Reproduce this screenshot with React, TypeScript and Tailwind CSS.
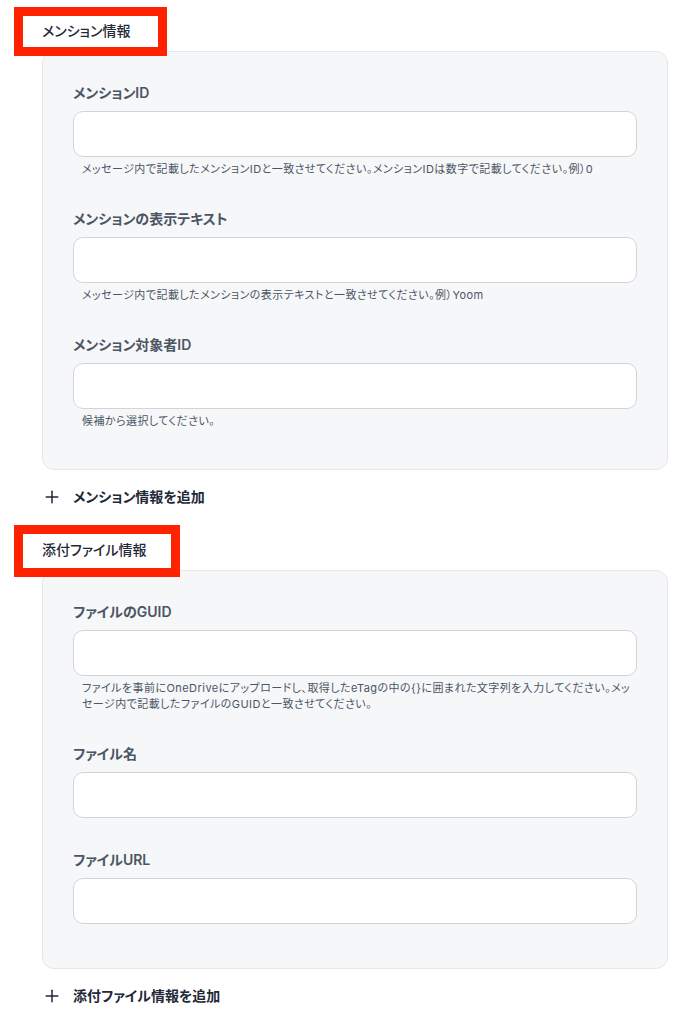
import { Plus } from "lucide-react";

type Field = {
  label: string;
  help?: string;
};

const mentionFields: Field[] = [
  {
    label: "メンションID",
    help: "メッセージ内で記載したメンションIDと一致させてください。メンションIDは数字で記載してください。例）0",
  },
  {
    label: "メンションの表示テキスト",
    help: "メッセージ内で記載したメンションの表示テキストと一致させてください。例）Yoom",
  },
  {
    label: "メンション対象者ID",
    help: "候補から選択してください。",
  },
];

const fileFields: Field[] = [
  {
    label: "ファイルのGUID",
    help: "ファイルを事前にOneDriveにアップロードし、取得したeTagの中の{}に囲まれた文字列を入力してください。メッセージ内で記載したファイルのGUIDと一致させてください。",
  },
  { label: "ファイル名" },
  { label: "ファイルURL" },
];

const FormField = ({ label, help }: Field) => (
  <div>
    <label className="block text-[14px] leading-5 font-semibold text-[#4b5563]">
      {label}
    </label>
    <input
      type="text"
      className="mt-2 block h-[46px] w-full rounded-[10px] border border-[#d1d5db] bg-white px-3 text-sm outline-none"
    />
    {help && (
      <p className="mt-1 pl-[9px] text-[11px] leading-4 tracking-[0.45px] text-[#4b5563]">
        {help}
      </p>
    )}
  </div>
);

const Section = ({
  title,
  frame,
  fields,
  addLabel,
  pb,
}: {
  title: string;
  frame: string;
  fields: Field[];
  addLabel: string;
  pb: string;
}) => (
  <section>
    <div className="relative pl-[42px]">
      <h3 className="text-[14px] leading-5 font-medium text-[#1f2937]">{title}</h3>
      {/* highlight frame around the section heading */}
      <div className={`absolute left-[14px] z-10 border-[9px] border-[#ff2200] ${frame}`} />
    </div>
    <div
      className={`mt-[10px] ml-[42px] mr-2 rounded-xl border border-[#e5e7eb] bg-[#f6f7f9] px-[30px] pt-[31px] ${pb}`}
    >
      <div className="flex flex-col gap-[32px]">
        {fields.map((f) => (
          <FormField key={f.label} {...f} />
        ))}
      </div>
    </div>
    <button className="mt-[17px] ml-[42px] flex items-center gap-[11px] text-[14px] leading-5 font-semibold text-[#1f2937]">
      <Plus size={20} strokeWidth={1.8} />
      {addLabel}
    </button>
  </section>
);

export default function App() {
  return (
    <div
      className="min-h-screen bg-white pt-[21px] [font-feature-settings:'palt']"
      style={{ fontFamily: 'Inter, "Noto Sans CJK JP", "Noto Sans", sans-serif' }}
    >
      <Section
        title="メンション情報"
        frame="top-[-14px] h-[49px] w-[153px]"
        fields={mentionFields}
        addLabel="メンション情報を追加"
        pb="pb-[40px]"
      />
      <div className="mt-[33px]">
        <Section
          title="添付ファイル情報"
          frame="top-[-15px] h-[52px] w-[166px]"
          fields={fileFields}
          addLabel="添付ファイル情報を追加"
          pb="pb-[44px]"
        />
      </div>
    </div>
  );
}
